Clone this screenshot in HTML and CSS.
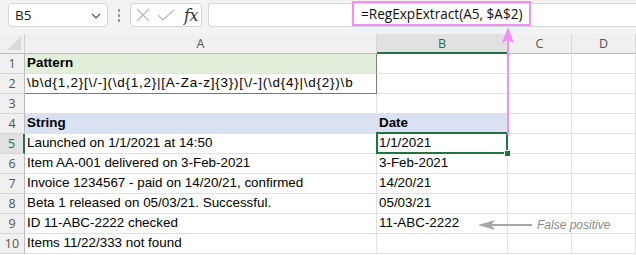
FILE: index.html
```html
<!DOCTYPE html>
<html>
<head>
<meta charset="utf-8">
<link rel="stylesheet" href="styles.css">
</head>
<body>
<div class="app">
  <div class="fbar">
    <div class="namebox">
      <span class="nb-text">B5</span>
      <svg class="chev" width="10" height="6" viewBox="0 0 10 6"><path d="M1 1 L5 5 L9 1" fill="none" stroke="#555" stroke-width="1.2"/></svg>
    </div>
    <div class="dots"><i></i><i></i><i></i></div>
    <div class="btns">
      <svg width="14" height="14" viewBox="0 0 14 14"><path d="M1 1 L13 13 M13 1 L1 13" stroke="#b9b9b9" stroke-width="1.2" fill="none"/></svg>
      <svg width="18" height="12" viewBox="0 0 18 12"><path d="M1 6 L6 11 L17 1" stroke="#b9b9b9" stroke-width="1.2" fill="none"/></svg>
      <span class="fx">fx</span>
    </div>
    <div class="finput">
      <span class="formula">=RegExpExtract(A5, $A$2)</span>
    </div>
  </div>

  <div class="sheet">
    <div class="corner"><svg width="14" height="14" viewBox="0 0 14 14"><path d="M14 0 L14 14 L0 14 Z" fill="#d9d9d9"/></svg></div>
    <div class="ch">A</div>
    <div class="ch ch-sel">B</div>
    <div class="ch">C</div>
    <div class="ch">D</div>

    <div class="rh">1</div>
    <div class="c green bold box-r">Pattern</div>
    <div class="c"></div><div class="c"></div><div class="c"></div>

    <div class="rh">2</div>
    <div class="c box-r box-b regex">\b\d{1,2}[\/-](\d{1,2}|[A-Za-z]{3})[\/-](\d{4}|\d{2})\b</div>
    <div class="c"></div><div class="c"></div><div class="c"></div>

    <div class="rh">3</div>
    <div class="c"></div><div class="c"></div><div class="c"></div><div class="c"></div>

    <div class="rh">4</div>
    <div class="c blue bold">String</div>
    <div class="c blue bold">Date</div>
    <div class="c"></div><div class="c"></div>

    <div class="rh rh-sel">5</div>
    <div class="c">Launched on 1/1/2021 at 14:50</div>
    <div class="c sel">1/1/2021<span class="handle"></span></div>
    <div class="c"></div><div class="c"></div>

    <div class="rh">6</div>
    <div class="c">Item AA-001 delivered on 3-Feb-2021</div>
    <div class="c">3-Feb-2021</div>
    <div class="c"></div><div class="c"></div>

    <div class="rh">7</div>
    <div class="c">Invoice 1234567 - paid on 14/20/21, confirmed</div>
    <div class="c">14/20/21</div>
    <div class="c"></div><div class="c"></div>

    <div class="rh">8</div>
    <div class="c">Beta 1 released on 05/03/21. Successful.</div>
    <div class="c">05/03/21</div>
    <div class="c"></div><div class="c"></div>

    <div class="rh">9</div>
    <div class="c">ID 11-ABC-2222 checked</div>
    <div class="c">11-ABC-2222</div>
    <div class="c"></div><div class="c"></div>

    <div class="rh">10</div>
    <div class="c">Items 11/22/333 not found</div>
    <div class="c"></div><div class="c"></div><div class="c"></div>
  </div>

  <svg class="pink-arrow" width="16" height="110" viewBox="0 0 16 110">
    <path d="M8 0 L14 16 L8 13 L2 16 Z" fill="#f48ef4"/>
    <rect x="7" y="12" width="2" height="96" fill="#f48ef4"/>
  </svg>

  <div class="note">
    <svg width="54" height="12" viewBox="0 0 54 12"><path d="M0 6 L17 1 L14 5 L54 5 L54 7 L14 7 L17 11 Z" fill="#a6a6a6"/></svg>
    <span class="note-text">False positive</span>
  </div>
</div>
</body>
</html>
```

FILE: styles.css
```css
* { box-sizing: border-box; }
html, body { margin: 0; padding: 0; background: #fff; }
.app { position: relative; width: 636px; height: 255px; overflow: hidden; background: #fff; }

.fbar {
  height: 34px;
  background: #f3f3f3;
  display: flex;
  align-items: flex-start;
  padding: 3px 0 0 8px;
}
.namebox {
  width: 100px; height: 24px;
  background: #fff;
  border: 1px solid #d6d6d6;
  border-radius: 4px;
  display: flex; align-items: center; justify-content: space-between;
  padding: 0 6px 0 6px;
  font-family: "Open Sans", sans-serif; font-size: 13.5px; color: #222;
}
.chev { margin-top: 1px; }
.dots { width: 22px; height: 24px; display: flex; flex-direction: column; align-items: center; justify-content: center; gap: 2px; }
.dots i { display: block; width: 2px; height: 3px; background: #9a9a9a; }
.btns {
  width: 72px; height: 24px;
  background: #fff;
  border: 1px solid #d6d6d6;
  border-radius: 4px;
  display: flex; align-items: center;
  padding: 0 0 0 5px; gap: 7px;
}
.fx { font-family: "DejaVu Serif", "Liberation Serif", serif; font-style: italic; font-size: 16px; color: #333; margin-left: 2px; letter-spacing: -0.5px; }
.finput {
  flex: 1; height: 24px; margin-left: 6px;
  background: #fff;
  border: 1px solid #d6d6d6; border-right: none;
  border-radius: 4px 0 0 4px;
  display: flex; align-items: flex-start;
}
.formula {
  margin: -3px 0 0 143px;
  height: 25px;
  border: 2px solid #f48ef4;
  padding: 0 6px 0 7px;
  display: flex; align-items: center;
  font-family: "Open Sans", sans-serif; font-size: 13.6px; color: #111;
}

.sheet {
  display: grid;
  grid-template-columns: 25px 352px 131px 64px 64px;
  grid-template-rows: repeat(11, 20px);
  font-family: "Liberation Sans", Arial, sans-serif;
}
.corner, .ch, .rh {
  background: #f0f0f0;
  color: #555;
  font-family: "Open Sans", sans-serif;
  font-size: 12.5px;
  display: flex; align-items: center; justify-content: center;
}
.corner { border-right: 1px solid #d0d0d0; border-bottom: 1px solid #bcbcbc; align-items: flex-end; justify-content: flex-end; padding: 0 3px 3px 0; }
.ch { border-right: 1px solid #d6d6d6; border-bottom: 1px solid #bcbcbc; }
.ch-sel { background: #e1e1e1; color: #217346; border-bottom: 2px solid #217346; }
.rh { border-right: 1px solid #bcbcbc; border-bottom: 1px solid #d6d6d6; }
.rh-sel { background: #e1e1e1; color: #217346; border-right: 2px solid #217346; }

.c {
  border-right: 1px solid #e1e1e1;
  border-bottom: 1px solid #e1e1e1;
  font-size: 13.4px; color: #000;
  padding: 0 0 3px 2px;
  display: flex; align-items: flex-end;
  white-space: nowrap;
  position: relative;
}
.regex { letter-spacing: 0.8px; }
.bold { font-weight: bold; }
.green { background: #e2efda; }
.blue { background: #d9e1f2; }
.box-r { border-right-color: #7a7a7a; }
.box-b { border-bottom-color: #7a7a7a; }
.sel::after {
  content: ""; position: absolute;
  left: -1px; top: -2px; right: -1px; bottom: -1px;
  border: 2px solid #217346;
}
.handle {
  position: absolute; right: -4px; bottom: -4px;
  width: 7px; height: 7px; background: #217346;
  border: 1px solid #fff; z-index: 2;
}

.pink-arrow { position: absolute; left: 500px; top: 27px; }
.note {
  position: absolute; left: 478px; top: 218px;
  display: flex; align-items: center; gap: 4px;
}
.note-text {
  background: #fff;
  font-family: "Liberation Sans", Arial, sans-serif;
  font-style: italic; font-size: 12px; color: #8a8a8a;
  padding: 0 1px;
}
```
